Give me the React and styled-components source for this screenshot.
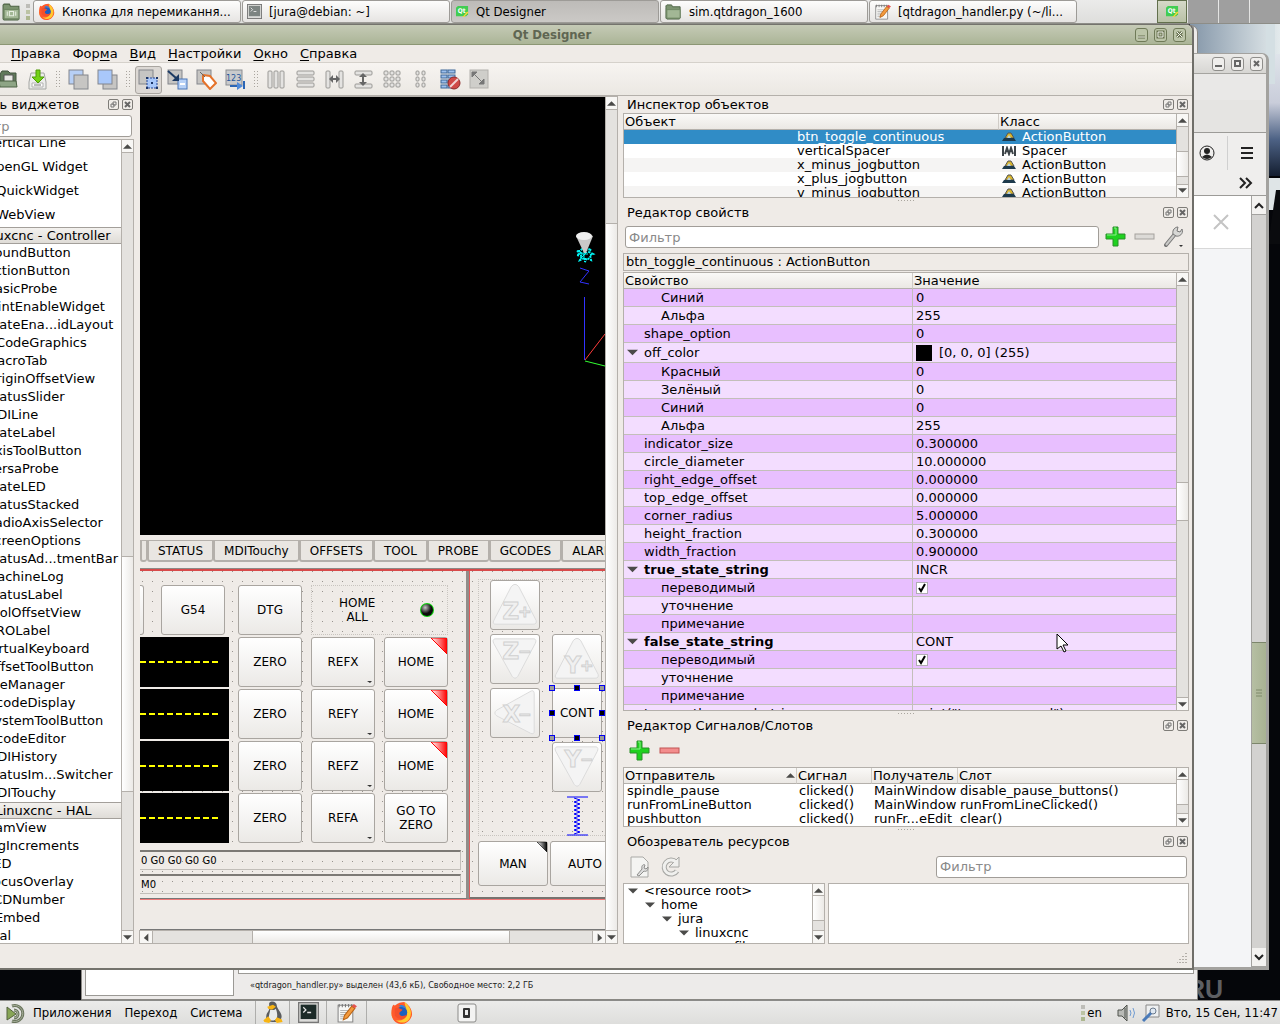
import React from 'react'
import styled, { createGlobalStyle, css } from 'styled-components'

const Face = '#efebe7'
const Edge = '#b4b0ab'
const Sans = '"DejaVu Sans", sans-serif'
const Narrow = '"DejaVu Sans Condensed", "DejaVu Sans", sans-serif'

const GlobalStyle = createGlobalStyle`
  * { box-sizing: border-box; }
  body {
    margin: 0;
    overflow: hidden;
    background: #05060a;
    font-family: ${Sans};
    font-size: 13px;
    color: #000;
  }
  button, input { font: inherit; color: inherit; }
  button { padding: 0; }
  svg { display: block; flex: none; }
`

const Screen = styled.div`
  display: flex;
  flex-direction: column;
  min-height: 100vh;
`

const Desktop = styled.main`
  flex: 1;
  position: relative;
  overflow: hidden;
  background: #05060a;
`

/* ---------- desktop panels ---------- */

const Panel = styled.div`
  height: 24px;
  display: flex;
  align-items: center;
  font-family: ${Narrow};
  font-size: 13px;
  background: linear-gradient(#ebebea, #dededc);
  overflow: hidden;
`

const TopPanel = styled(Panel)`
  border-bottom: 1px solid #8d8d87;
  gap: 1px;
`

const TaskButton = styled.button`
  flex: 0 1 208px;
  height: 23px;
  display: flex;
  align-items: center;
  gap: 7px;
  padding: 0 4px;
  border: 1px solid #9d9b97;
  border-radius: 3px;
  white-space: nowrap;
  background: ${(p) =>
    p.$active
      ? 'linear-gradient(#bdbbb8, #cbc9c6)'
      : 'linear-gradient(#fdfdfc, #e6e4e2)'};
`

const PanelIcon = styled.button`
  display: flex;
  align-items: center;
  justify-content: center;
  width: ${(p) => p.$width || 24}px;
  height: 23px;
  border: 0;
  background: none;
`

const Grip = styled.span`
  width: 4px;
  height: 16px;
  margin: 0 2px;
  background: linear-gradient(#bdbdb8 4px, transparent 4px 6px, #bcc3a4 6px 10px, transparent 10px 12px, #adb78f 12px);
`

const Spacer = styled.span`
  flex: 1;
`

const Workspace = styled.button`
  width: 30px;
  height: 23px;
  display: flex;
  align-items: center;
  justify-content: center;
  border: ${(p) => (p.$current ? '1px solid #62704d' : '0')};
  background: ${(p) =>
    p.$current ? 'linear-gradient(#d5d9c8, #b9c1a6)' : '#9f9f9f'};
`

const BottomPanel = styled(Panel)`
  border-top: 1px solid #8b8b89;
`

const PanelMenu = styled.button`
  margin-right: 13px;
  border: 0;
  background: none;
`

const Launcher = styled(PanelIcon)`
  border-left: 1px solid #aeaeac;
`

const Clock = styled.time`
  margin: 0 2px 0 3px;
  white-space: nowrap;
`

/* ---------- windows ---------- */

const Window = styled.section`
  position: absolute;
  display: flex;
  flex-direction: column;
  border: 1px solid #8a8884;
  background: ${Face};
`

const BrowserWindow = styled(Window)`
  top: 29px;
  right: 11px;
  bottom: 30px;
  width: 400px;
  border-width: 1px 3px 3px 1px;
  border-color: #a3a29f;
  border-radius: 0 7px 0 0;
  background: #ededed;
  align-items: stretch;
`

const FilesWindow = styled(Window)`
  top: 1px;
  left: 81px;
  right: 82px;
  bottom: 0;
  border-radius: 0 7px 0 0;
  background: #edebea;
  justify-content: flex-end;
`

const FilesPanes = styled.div`
  flex: 1;
  display: flex;
  gap: 4px;
  padding: 0 3px;
`

const FilesPane = styled.div`
  background: #fff;
  border: 1px solid #9b9995;
  width: ${(p) => p.$width || 'auto'};
  flex: ${(p) => (p.$width ? 'none' : 1)};
  margin-bottom: ${(p) => p.$gap}px;
`

const FilesStatus = styled.p`
  height: 24px;
  margin: -24px 0 0 168px;
  line-height: 20px;
  font-family: ${Narrow};
  font-size: 9px;
  color: #222;
`

const DesignerWindow = styled(Window)`
  top: 0;
  left: -48px;
  right: 86px;
  bottom: 30px;
  border-width: 1px 3px 2px 1px;
  border-color: #74736d;
  border-right: 2px solid #6f6e69;
  border-radius: 0 7px 0 0;
`

const TitleBar = styled.header`
  height: 20px;
  display: flex;
  align-items: center;
  gap: 6px;
  padding-right: ${(p) => (p.$plain ? 3 : 6)}px;
  font-family: ${Narrow};
  font-weight: bold;
  color: #5f6652;
  border-radius: 0 6px 0 0;
  border-bottom: 1px solid ${(p) => (p.$plain ? '#a5a4a0' : '#8c9775')};
  background: ${(p) =>
    p.$plain
      ? 'linear-gradient(#ebeae8, #d7d6d3)'
      : 'linear-gradient(#c5cab6, #abb597)'};
`

const TitleText = styled.h1`
  flex: 1;
  margin: 0;
  padding-left: 22px;
  font-size: 13px;
  text-align: center;
`

const WinButton = styled.button`
  width: 13px;
  height: 14px;
  display: flex;
  align-items: center;
  justify-content: center;
  border: 1px solid ${(p) => (p.$plain ? '#8f8e8b' : '#6f7a58')};
  border-radius: 3px;
  background: ${(p) => (p.$plain ? '#efeeec' : '#bcc5a9')};
`

const MenuBar = styled.nav`
  height: 18px;
  display: flex;
  align-items: center;
  gap: 12px;
  padding-left: 10px;
  border-bottom: 1px solid #d5d1cb;
  a {
    color: #000;
    text-decoration: none;
  }
  u {
    text-underline-offset: 2px;
  }
`

const ToolBar = styled.div`
  height: 33px;
  display: flex;
  align-items: center;
  padding: 1px 0 0 12px;
  border-bottom: 1px solid ${Edge};
  background: linear-gradient(#f7f4f1, #ebe8e3);
`

const ToolButton = styled.button`
  width: 27px;
  height: 28px;
  margin: 0 1px;
  display: flex;
  align-items: center;
  justify-content: center;
  border: 1px solid ${(p) => (p.$on ? '#a9a5a0' : 'transparent')};
  border-radius: 3px;
  background: ${(p) => (p.$on ? '#dcd8d4' : 'none')};
`

const ToolGap = styled.span`
  width: 4px;
  height: 17px;
  margin: 0 4px;
  background:
    linear-gradient(transparent 1px, #f1eeea 1px) 0 0 / 3px 3px,
    linear-gradient(90deg, #aaa69f 1px, transparent 1px) 0 0 / 3px 3px;
`

const Body = styled.div`
  flex: 1;
  min-height: 0;
  display: flex;
`

const StatusBar = styled.footer`
  height: 24px;
  display: flex;
  align-items: flex-end;
  justify-content: flex-end;
  padding: 4px;
`

/* ---------- scroll bars ---------- */

const Rail = styled.div`
  flex: none;
  display: flex;
  flex-direction: ${(p) => (p.$across ? 'row' : 'column')};
  ${(p) => (p.$across ? 'height: 13px;' : 'width: 12px;')}
  background: #e4e2df;
  border: 0 solid ${Edge};
  ${(p) => (p.$across ? 'border-top-width: 1px;' : 'border-left-width: 1px;')}
`

const RailButton = styled.button`
  flex: none;
  width: ${(p) => (p.$across ? 12 : 11)}px;
  height: 12px;
  display: flex;
  align-items: center;
  justify-content: center;
  border: 0;
  background: #f8f7f5;
  box-shadow: 0 0 0 1px ${Edge};
`

const Track = styled.div`
  flex: ${(p) => p.$part} 1 0;
`

const Thumb = styled(Track)`
  box-shadow: 0 0 0 1px ${Edge};
  background: linear-gradient(${(p) => (p.$across ? 180 : 90)}deg, #fff, #eceae7);
`

const arrows = {
  up: 'M0 7 L5 2 L10 7Z',
  down: 'M0 2 L5 7 L10 2Z',
  left: 'M7 0 L2 5 L7 9Z',
  right: 'M3 0 L8 5 L3 9Z',
}

function Arrow({ dir, size = 9 }) {
  return (
    <svg width={size} height={size} viewBox="0 0 10 9">
      <path d={arrows[dir]} fill="#4b4b49" />
    </svg>
  )
}

function ScrollBar({ across, start, size }) {
  return (
    <Rail $across={across}>
      <RailButton $across={across} aria-label="Назад">
        <Arrow dir={across ? 'left' : 'up'} />
      </RailButton>
      <Track $part={start} />
      <Thumb $part={size} $across={across} />
      <Track $part={100 - start - size} />
      <RailButton $across={across} aria-label="Вперёд">
        <Arrow dir={across ? 'right' : 'down'} />
      </RailButton>
    </Rail>
  )
}

/* ---------- docks ---------- */

const LeftDock = styled.aside`
  width: 181px;
  flex: none;
  display: flex;
  flex-direction: column;
`

const RightDock = styled.aside`
  flex: 0 0 569px;
  display: flex;
  flex-direction: column;
  padding-right: 3px;
`

const DockTitle = styled.div`
  height: 17px;
  flex: none;
  display: flex;
  align-items: center;
  gap: 3px;
  padding: 0 1px 0 4px;
`

const DockName = styled.h2`
  flex: 1;
  margin: 0;
  font-size: 13px;
  font-weight: normal;
  white-space: nowrap;
`

const DockButton = styled.button`
  width: 11px;
  height: 11px;
  display: flex;
  align-items: center;
  justify-content: center;
  border: 1px solid #7e7c78;
  border-radius: 2px;
  background: #efece8;
`

const Filter = styled.input`
  height: 22px;
  min-width: 0;
  padding: 0 3px;
  border: 1px solid #a19d98;
  border-radius: 3px;
  background: #fff;
  &::placeholder {
    color: #8a8a8a;
    opacity: 1;
  }
`

const PaletteFilter = styled(Filter)`
  margin: 2px 2px 2px 1px;
`

const ListFrame = styled.div`
  display: flex;
  min-height: 0;
  overflow: hidden;
  flex: ${(p) => (p.$height ? 'none' : 1)};
  ${(p) => p.$height && `height: ${p.$height}px;`}
  border: 1px solid ${Edge};
  background: #fff;
`

const ListView = styled.div`
  flex: 1;
  min-width: 0;
  min-height: 0;
  overflow: hidden;
`

const PaletteList = styled.ul`
  list-style: none;
  margin: -9px 0 0;
  padding: 0;
`

const PaletteItem = styled.li`
  height: ${(p) => (p.$tall ? 24 : 18)}px;
  line-height: ${(p) => (p.$tall ? 24 : 18)}px;
  padding-left: 32px;
  white-space: nowrap;
`

const PaletteGroup = styled.li`
  height: 17px;
  line-height: 15px;
  padding-left: 12px;
  text-align: center;
  white-space: nowrap;
  border: 1px solid #a39f9a;
  border-width: 1px 0;
  background: linear-gradient(#f3f1ee, #dfdcd7);
`

const Splitter = styled.div`
  flex: none;
  height: 6px;
  width: 16px;
  margin: 0 auto;
  background:
    linear-gradient(transparent 1px, ${Face} 1px) 0 2px / 3px 6px,
    linear-gradient(90deg, #aaa69f 1px, transparent 1px) 0 0 / 3px 3px;
`

const Grid = styled.table`
  width: 100%;
  table-layout: fixed;
  border-collapse: separate;
  border-spacing: 0;
  th {
    height: 16px;
    padding: 0 1px;
    line-height: 15px;
    font-weight: normal;
    text-align: left;
    border-bottom: 1px solid ${Edge};
    background: linear-gradient(#faf9f7, #ebe8e4);
  }
  th + th {
    border-left: 1px solid #d0ccc7;
  }
  td {
    height: 14px;
    padding: 0 0 0 4px;
    line-height: 14px;
    white-space: nowrap;
    overflow: hidden;
  }
`

const SignalGrid = styled(Grid)`
  td {
    padding-left: 3px;
  }
`

const HeadSplit = styled.span`
  display: flex;
  align-items: center;
  justify-content: space-between;
`

const ObjectRow = styled.tr`
  background: ${(p) => (p.$picked ? '#308cc6' : p.$odd ? '#f5f4f3' : '#fff')};
  color: ${(p) => (p.$picked ? '#fff' : '#000')};
  td:first-child {
    padding-left: 173px;
  }
`

const ClassCell = styled.span`
  display: flex;
  align-items: center;
  gap: 6px;
`

const PropRow = styled.tr`
  background: ${(p) => (p.$odd ? '#f3ddff' : '#e8bfff')};
  td {
    height: ${(p) => (p.$tall ? 20 : 18)}px;
    line-height: 17px;
    padding: 0 3px;
    border-bottom: 1px solid #c3bfba;
  }
  td + td {
    border-left: 1px solid #c3bfba;
  }
`

const PropName = styled.span`
  display: flex;
  align-items: center;
  gap: 6px;
  padding-left: ${(p) => (p.$depth === 2 ? 34 : p.$open ? 0 : 17)}px;
  font-weight: ${(p) => (p.$bold ? 'bold' : 'normal')};
`

const Swatch = styled.span`
  width: 16px;
  height: 16px;
  margin-right: 7px;
  background: #000;
`

const ColorValue = styled.span`
  display: flex;
  align-items: center;
`

const Tick = styled.input`
  appearance: none;
  display: block;
  width: 12px;
  height: 12px;
  margin: 0;
  border: 1px solid #b1adb4;
  background: #fff url("data:image/svg+xml,%3Csvg xmlns='http://www.w3.org/2000/svg' viewBox='0 0 10 10'%3E%3Cpath d='M2 5 L4 8 L8 1' fill='none' stroke='black' stroke-width='2'/%3E%3C/svg%3E");
`

const FilterRow = styled.div`
  flex: none;
  height: 32px;
  display: flex;
  align-items: center;
  gap: 5px;
  padding: 0 3px 0 2px;
`

const GrowFilter = styled(Filter)`
  flex: 1;
`

const SideFilter = styled(Filter)`
  width: 251px;
`

const FlatButton = styled.button`
  width: 24px;
  height: 24px;
  display: flex;
  align-items: center;
  justify-content: center;
  border: 0;
  background: none;
`

const ObjectLabel = styled.div`
  flex: none;
  height: 18px;
  margin-bottom: 1px;
  padding: 0 2px;
  line-height: 16px;
  border: 1px solid ${Edge};
`

const ToolRow = styled.div`
  flex: none;
  height: 33px;
  display: flex;
  align-items: center;
  gap: 6px;
  padding: 0 2px 0 5px;
`

const ResourceRow = styled.div`
  flex: none;
  height: 61px;
  display: flex;
  gap: 3px;
`

const ResourceFrame = styled(ListFrame)`
  height: 61px;
  flex: ${(p) => (p.$tree ? '0 0 202px' : 1)};
`

const TreeLine = styled.div`
  height: 14px;
  line-height: 14px;
  display: flex;
  align-items: center;
  gap: 6px;
  padding-left: ${(p) => 4 + p.$depth * 17}px;
  white-space: nowrap;
`

/* ---------- form editor ---------- */

const dots = css`
  background:
    linear-gradient(transparent 1px, ${Face} 1px) 2px 10px / 10px 10px,
    linear-gradient(90deg, #98948f 1px, transparent 1px) 2px 10px / 10px 10px;
`

const Editor = styled.div`
  flex: 1;
  min-width: 0;
  display: flex;
  margin: 0 5px;
  border: 1px solid ${Edge};
  border-left-color: ${Face};
`

const EditorMain = styled.div`
  flex: 1;
  min-width: 0;
  display: flex;
  flex-direction: column;
`

const Form = styled.div`
  flex: 1;
  min-height: 0;
  display: flex;
  flex-direction: column;
  overflow: hidden;
`

const GlView = styled.div`
  flex: 1;
  display: flex;
  justify-content: flex-end;
  padding-top: 133px;
  background: #000;
`

const Tabs = styled.div`
  display: flex;
  flex: none;
  height: 34px;
  padding: 5px 0 6px;
  border-bottom: 1px solid #8d8985;
  overflow: hidden;
`

const Tab = styled.button`
  flex: none;
  padding: 0 9px;
  border: 1px solid ${Edge};
  border-width: 1px 1px 2px 2px;
  border-radius: 0 0 3px 3px;
  background: #e9e6e2;
  font-size: 12px;
  line-height: 14px;
`

const CutTab = styled(Tab)`
  width: 7px;
  padding: 0;
`

const Page = styled.div`
  flex: none;
  display: flex;
  border-top: 2px solid #d84a4a;
  border-bottom: 1px solid #f27878;
  overflow: hidden;
`

const AxisFrame = styled.div`
  flex: 0 0 329px;
  padding: 14px 5px 4px 0;
  border-right: 3px solid #918d89;
  border-bottom: 1px solid #777;
  ${dots}
`

const FormRow = styled.div`
  display: flex;
  gap: 9px;
  margin-bottom: 2px;
`

const LeadCells = styled.div`
  width: 89px;
  height: 50px;
  flex: none;
  display: flex;
  justify-content: space-between;
  padding-right: ${(p) => (p.$head ? 4 : 0)}px;
`

const PushButton = styled.button`
  position: relative;
  flex: none;
  width: ${(p) => p.$width || 64}px;
  height: ${(p) => p.$height || 50}px;
  display: flex;
  align-items: center;
  justify-content: center;
  border: 1px solid #a9a5a0;
  border-radius: 3px;
  background: linear-gradient(#fff, #ebe9e6);
  font-size: 12px;
  line-height: 14px;
`

const CutButton = styled(PushButton)`
  width: 4px;
  border-left: 0;
  border-radius: 0 3px 3px 0;
`

const Corner = styled.svg`
  position: absolute;
  right: 0;
  top: 0;
`

const MenuMark = styled.svg`
  position: absolute;
  right: 2px;
  bottom: 2px;
`

const Readout = styled.div`
  flex: 1;
  display: flex;
  align-items: center;
  background: #000;
`

const HomeBox = styled.div`
  width: 137px;
  height: 50px;
  display: flex;
  align-items: center;
  justify-content: space-between;
  padding: 0 12px 0 27px;
  border: 1px dotted #c9c5c0;
  font-size: 12px;
  line-height: 14px;
  text-align: center;
`

const CodeLine = styled.div`
  height: 20px;
  margin-top: ${(p) => p.$first ? 7 : 4}px;
  padding-left: 1px;
  border: 1px solid #c2beb9;
  border-top: 2px solid #7c7975;
  border-left: 0;
  font-size: 10px;
  line-height: 17px;
`

const JogFrame = styled.div`
  flex: 1;
  min-width: 0;
  padding: 8px 0 11px 8px;
  border-left: 1px solid #e05a5a;
  border-bottom: 2px solid #77736f;
  overflow: hidden;
  ${dots}
`

const JogGrid = styled.div`
  display: grid;
  grid-template-columns: 50px 50px;
  grid-auto-rows: 50px;
  gap: 4px 12px;
  height: 257px;
  padding-left: 11px;
  border: 1px dotted #c9c5c0;
  border-width: 1px 0 1px 1px;
`

const Selected = styled.div`
  position: relative;
`

const Handle = styled.span`
  position: absolute;
  width: 6px;
  height: 6px;
  left: ${(p) => p.$x * 25 - 3}px;
  top: ${(p) => p.$y * 25 - 3}px;
  border: 1px solid #0000f0;
  background: ${(p) => (p.$x === 1 || p.$y === 1 ? '#000' : '#9a9a9a')};
`

const ModeRow = styled.div`
  display: flex;
  gap: 2px;
  margin-top: 5px;
`

const FormFoot = styled.div`
  flex: none;
  height: 30px;
  border-bottom: 1px solid #777;
`

/* ---------- browser behind ---------- */

const BrowserBar = styled.div`
  height: ${(p) => p.$height}px;
  flex: none;
  display: flex;
  flex-direction: column;
  align-items: flex-end;
  justify-content: space-between;
  padding: 8px 12px 4px 0;
  border-bottom: 1px solid #9c9b98;
  background: ${(p) => p.$bg};
`

const BrowserIcons = styled.div`
  display: flex;
  align-items: center;
  gap: 12px;
  height: 24px;
`

const Rule = styled.span`
  width: 1px;
  height: 34px;
  background: #d0d0d0;
`

const BrowserBody = styled.div`
  flex: 1;
  display: flex;
`

const BrowserPage = styled.div`
  flex: 1;
  background: #f4f5f7;
`

const Notice = styled.div`
  height: 53px;
  display: flex;
  align-items: center;
  justify-content: flex-end;
  padding-right: 21px;
  background: #fff;
  border-bottom: 1px solid #d8d8d8;
`

const BrowserRail = styled.div`
  width: 15px;
  display: flex;
  flex-direction: column;
  border-left: 1px solid #a3a29f;
  background: #d3d2d0;
  button {
    height: 19px;
    padding: 0;
    border: 0;
    border-bottom: 1px solid #a3a29f;
    background: #f3f2f0;
  }
`

const BrowserThumb = styled.div`
  flex: 100 1 0;
  display: flex;
  align-items: center;
  justify-content: center;
  border: 1px solid #7c866b;
  border-width: 1px 0;
  background: linear-gradient(90deg, #b6bfa3, #a8b293);
`

const Pointer = styled.svg`
  position: absolute;
  left: 1056px;
  top: 609px;
`

const Wallpaper = styled.svg`
  position: absolute;
  right: 0;
  top: 0;
`

const WallText = styled.span`
  position: absolute;
  right: 57px;
  bottom: -3px;
  font: bold 25px/28px "Liberation Sans", sans-serif;
  color: #5d5f63;
`

/* ---------- drawings ---------- */

function QtIcon() {
  return (
    <svg width="13" height="13" viewBox="0 0 14 14">
      <path d="M2 1h11v9l-2 2H0V3z" fill="#41cd52" />
      <text x="2" y="9" fontSize="7" fontWeight="bold" fill="#fff">Qt</text>
      <path d="M7 13l5-6 1.500 1-5 5z" fill="#ffd633" />
    </svg>
  )
}

function Firefox({ size = 17 }) {
  return (
    <svg width={size} height={size} viewBox="0 0 24 24">
      <circle cx="12" cy="13" r="10.500" fill="#ff9a1f" />
      <path d="M2 7 C3 4 4 3 5 5 C8 2 12 1 15 1 C20 4 23 9 23 14 C22 20 17 24 12 24 C5 24 0 18 2 7Z" fill="#ff5a2c" />
      <path d="M15 1 C23 7 23 14 20 19 C17 23 11 24 6 20 C13 22 20 17 17 9Z" fill="#ffcb2e" />
      <circle cx="12" cy="12" r="6" fill="#1d5fbf" />
      <path d="M5 8 C8 6 10 8 13 9 C12 11 9 11 10 14 C12 17 16 15 18 14 C16 20 8 20 5 15Z" fill="#f4502a" />
      <path d="M9 5 C12 3 16 5 17 8 C14 6 12 7 9 5Z" fill="#2a86df" />
    </svg>
  )
}

function FolderIcon({ size = 17, mark }) {
  return (
    <svg width={size} height={size} viewBox="0 0 18 18">
      <path d="M1 5V3l1-1h5l1 2h8v12l-1 1H2l-1-1z" fill="#7c9470" stroke="#4d6344" />
      <path d="M2 7h14v9H2z" fill="#a2b795" stroke="#6f8763" />
      {mark && <path d="M5 9v4m8-4v4M7 9h4v4H7z" fill="none" stroke="#e8efe2" />}
    </svg>
  )
}

function TerminalIcon({ size = 15, dark }) {
  return (
    <svg width={size} height={size} viewBox="0 0 16 16">
      <rect x="0.500" y="0.500" width="15" height="15" fill="#dcdcda" stroke="#777" />
      <rect x="2" y="2" width="12" height="11" fill={dark ? '#1c2b28' : '#7d8482'} />
      <path d="M4 4l2 2-2 2M7 8h3" fill="none" stroke="#e5e5e5" />
    </svg>
  )
}

function NoteIcon({ size = 17 }) {
  return (
    <svg width={size} height={size} viewBox="0 0 20 20">
      <path d="M2 3h14v16H2z" fill="#f7f7f5" stroke="#888" />
      <path d="M3 2v3M6 2v3M9 2v3M12 2v3M15 2v3" stroke="#777" />
      <path d="M4 8h9M4 10h8M4 12h6M4 14h5M4 16h4" stroke="#b5b5b5" />
      <path d="M8 13l7-9 3 2-7 9-4 2z" fill="#f39a3d" stroke="#b96212" />
      <path d="M15 4l2-2 3 2-2 2z" fill="#e4534e" />
    </svg>
  )
}

function MateLogo() {
  return (
    <svg width="22" height="20" viewBox="0 0 22 20">
      <path d="M1 4v13l9-6z" fill="#87a556" stroke="#54633f" />
      <path d="M6 3a8 8 0 1 1 0 15M8 7a4 4 0 1 1 0 8" fill="none" stroke="#69745c" strokeWidth="3" />
      <path d="M6 3a8 8 0 1 1 0 15M8 7a4 4 0 1 1 0 8" fill="none" stroke="#a7b09b" />
    </svg>
  )
}

function Penguin() {
  return (
    <svg width="22" height="23" viewBox="0 0 22 24">
      <path d="M7 2c3-3 8-1 8 3 0 3 5 7 5 11 0 4-3 6-8 6s-9-2-8-6c0-4 3-5 3-8z" fill="#5a5c5e" />
      <path d="M8 9c3 1 5 0 6-1 1 3 2 6 1 10-2 3-6 3-8 1-1-4 1-7 1-10z" fill="#e9ebec" />
      <path d="M5 6l6-2 3 2-4 3-4-1zM1 20l5-4 3 4-2 3-5-1zM13 20l2-3 5 2 1 3-6 1z" fill="#f7b413" />
    </svg>
  )
}

function SwitchIcon() {
  return (
    <svg width="20" height="20" viewBox="0 0 20 20">
      <rect x="1" y="1" width="18" height="18" rx="2" fill="#f3f3f2" stroke="#8b8b89" />
      <rect x="6" y="5" width="7" height="10" rx="1" fill="#333" />
      <rect x="8" y="7" width="3" height="5" fill="#eee" />
    </svg>
  )
}

function Speaker() {
  return (
    <svg width="20" height="20" viewBox="0 0 20 20">
      <path d="M1 7h4l5-5v16l-5-5H1z" fill="#b9bbb7" stroke="#4f524d" />
      <path d="M8 5v10" stroke="#4f524d" />
      <path d="M13 7q2 3 0 6M16 5q3 5 0 10" fill="none" stroke="#6f9bd1" />
    </svg>
  )
}

function SearchIcon() {
  return (
    <svg width="20" height="20" viewBox="0 0 20 20">
      <path d="M5 2h13v12H5z" fill="#eef0f1" stroke="#888" />
      <circle cx="12" cy="8" r="3" fill="#dfe8f2" stroke="#6b7a8c" />
      <path d="M10 10l-8 8" stroke="#4a7ab8" strokeWidth="3" />
    </svg>
  )
}

const winMarks = {
  min: 'M2 8h7',
  max: 'M3 3h5v5h-5z',
  close: 'M3 3l5 5M8 3l-5 5',
}

function WinButtons({ plain }) {
  return ['min', 'max', 'close'].map((kind) => (
    <WinButton key={kind} $plain={plain} aria-label={kind}>
      <svg width="11" height="11" viewBox="0 0 11 11">
        {!plain && <path d={winMarks[kind]} fill="none" stroke="#66704f" strokeWidth="3" />}
        <path d={winMarks[kind]} fill="none" stroke={plain ? '#666' : '#f4f6ee'} strokeWidth={plain ? 2 : 1} />
      </svg>
    </WinButton>
  ))
}

const SquareBack = ({ x, y, fill = '#c6c5c3' }) => (
  <rect x={x} y={y} width="14" height="14" fill={fill} stroke="#83868c" />
)

const LayoutBox = (p) => (
  <rect rx="1" fill="#e4e3e1" stroke="#9a9996" {...p} />
)

const toolDrawings = {
  new: <path d="M4 1h9l4 4v15H4z" fill="#fff" stroke="#888" />,
  open: (
    <>
      <path d="M2 5l2-3h6l2 2h6v12H2z" fill="#60795a" stroke="#42553e" />
      <path d="M6 6h9v9H6z" fill="#e8e8e4" stroke="#555" />
      <path d="M1 12h17l1 6H2z" fill="#8ea585" stroke="#4d6344" />
    </>
  ),
  save: (
    <>
      <path d="M4 4h13l2 9v7H2v-7z" fill="#ecedeb" stroke="#a3a5a2" />
      <path d="M5 14h11v4H5z" fill="#fff" stroke="#b1b1af" />
      <path d="M7 16h7" stroke="#777" />
      <path d="M9 1h4v7h4l-6 6-6-6h4z" fill="#73d216" stroke="#4e9a06" />
    </>
  ),
  lower: (
    <>
      <SquareBack x="1" y="1" fill="#b7cff5" />
      <SquareBack x="6" y="6" />
    </>
  ),
  raise: (
    <>
      <SquareBack x="6" y="6" />
      <SquareBack x="1" y="1" fill="#a9c8fa" />
    </>
  ),
  edit: (
    <>
      <SquareBack x="1" y="1" />
      <rect x="9" y="9" width="10" height="10" fill="#a9c8fa" stroke="#28489a" strokeDasharray="2 1" />
      <path d="M8 8h2v2h-2zM18 8h2v2h-2zM8 18h2v2h-2zM18 18h2v2h-2zM13 13h2v2h-2z" fill="#1c3568" />
    </>
  ),
  signals: (
    <>
      <SquareBack x="1" y="1" />
      <rect x="11" y="10" width="9" height="10" fill="#b7d1f6" stroke="#4a76b8" />
      <path d="M13 15h5" stroke="#fff" strokeWidth="2" />
      <path d="M1 2l8 7" stroke="#1c3a63" strokeWidth="2" />
      <path d="M12 5v7H5z" fill="#1c3a63" />
    </>
  ),
  buddy: (
    <>
      <SquareBack x="1" y="1" />
      <path d="M7 6l7 1 6 7-6 6-7-8z" fill="#fff" stroke="#e5732b" strokeWidth="2" />
      <path d="M4 3l5 5" stroke="#666" />
    </>
  ),
  order: (
    <>
      <rect x="1" y="1" width="16" height="15" fill="#c9cacc" stroke="#8a8d92" />
      <text x="1" y="12" fontSize="8" fill="#24579b">123</text>
      <path d="M5 17h8M19 12v8" stroke="#2b66b5" strokeWidth="2" />
      <path d="M12 13l6 4-6 4z" fill="#4f8ad8" />
    </>
  ),
  horizontal: [2, 8, 14].map((x) => <LayoutBox key={x} x={x} y="2" width="4" height="17" />),
  vertical: [2, 8, 14].map((y) => <LayoutBox key={y} x="2" y={y} width="17" height="4" />),
  splitH: (
    <>
      <LayoutBox x="2" y="2" width="4" height="17" />
      <LayoutBox x="15" y="2" width="4" height="17" />
      <path d="M5 10l4-4v3h3v-3l4 4-4 4v-3h-3v3z" fill="#666" />
    </>
  ),
  splitV: (
    <>
      <LayoutBox x="2" y="2" width="17" height="4" />
      <LayoutBox x="2" y="15" width="17" height="4" />
      <path d="M10 4l4 4h-3v5h3l-4 4-4-4h3v-5h-3z" fill="#666" />
    </>
  ),
  grid: [2, 8, 14].map((y) =>
    [2, 8, 14].map((x) => <LayoutBox key={`${x}-${y}`} x={x} y={y} width="4" height="4" />),
  ),
  formGrid: [2, 8, 14].map((y) =>
    [5, 11].map((x) => <LayoutBox key={`${x}-${y}`} x={x} y={y} width="3" height="4" />),
  ),
  breakLayout: (
    <>
      {[1, 6, 11, 16].map((y) => (
        <g key={y} fill="#9cc0ee" stroke="#3c6797">
          <rect x="1" y={y} width="6" height="3" />
          <rect x="8" y={y} width="7" height="3" />
        </g>
      ))}
      <circle cx="14" cy="14" r="6" fill="#cf4a48" stroke="#8e2b2b" />
      <path d="M10 18l8-8" stroke="#f0d5d5" strokeWidth="2" />
    </>
  ),
  adjust: (
    <>
      <rect x="1" y="1" width="18" height="18" fill="#cfceca" stroke="#b2b0ac" />
      <path d="M3 3h5l-5 5zM15 15h-5l5-5zM5 5l8 8" fill="#777" stroke="#777" />
    </>
  ),
}

function ToolIcon({ name }) {
  return (
    <svg width="21" height="21" viewBox="0 0 21 21">
      {toolDrawings[name]}
    </svg>
  )
}

function PlusIcon() {
  return (
    <svg width="22" height="22" viewBox="0 0 22 22">
      <path d="M8 1h5v7h7v5h-7v7H8v-7H1V8h7z" fill="#1fd11f" stroke="#2b8f2b" />
      <path d="M9 2h2v7H2" fill="none" stroke="#8cf08c" />
    </svg>
  )
}

function MinusIcon({ red }) {
  return (
    <svg width="22" height="22" viewBox="0 0 22 22">
      <rect x="1" y="8" width="19" height="5" fill={red ? '#f38d8d' : '#dcdad7'} stroke={red ? '#c25555' : '#a5a29e'} />
    </svg>
  )
}

function Wrench() {
  return (
    <svg width="20" height="22" viewBox="0 0 20 22">
      <path d="M2 19l9-11" stroke="#777" strokeWidth="4" strokeLinecap="round" />
      <path d="M2 19l9-11" stroke="#c9c9c7" strokeWidth="2" />
      <path d="M9 8c-1-4 2-7 5-7l-1 4 3 1 2-3c2 5-3 8-6 7z" fill="#d7d7d5" stroke="#777" />
      <path d="M15 19h4l-2 2z" fill="#333" />
    </svg>
  )
}

function WidgetIcon({ spacer }) {
  return (
    <svg width="14" height="10" viewBox="0 0 14 10">
      {spacer ? (
        <path d="M1 0v10M13 0v10M3 8l2-6 2 6 2-6 2 6" fill="none" stroke="#3d4448" strokeWidth="2" />
      ) : (
        <>
          <path d="M3 6l3-5h3l3 5z" fill="#d8b52c" stroke="#555" />
          <path d="M0 9l2-3h10l2 3z" fill="#1d3a4c" />
          <path d="M5 6l2-3 2 3z" fill="#b8d0e0" />
        </>
      )}
    </svg>
  )
}

function JogIcon({ dir, label }) {
  const shapes = {
    up: 'M21 6Q25 1 29 6L47 41Q48 45 44 45H5Q1 45 3 41Z',
    down: 'M4 4H45Q48 5 46 9L28 43Q25 47 22 43L3 9Q1 5 4 4Z',
    left: 'M42 2Q45 1 45 5V44Q45 48 41 46L6 28Q2 25 6 22Z',
  }
  const y = { up: 40, down: 25, left: 34 }[dir]
  return (
    <svg width="48" height="48" viewBox="0 0 50 50">
      <path d={shapes[dir]} fill="#f4f4f4" stroke="#dadada" />
      <text x="12" y={y} fontSize="24" fontWeight="bold" fill="#f0f0f0" stroke="#d0d0d0">{label[0]}</text>
      <text x="28" y={y - 2} fontSize="17" fontWeight="bold" fill="#f3f3f3" stroke="#d0d0d0">{label[1]}</text>
    </svg>
  )
}

function GlScene() {
  return (
    <svg width="40" height="142" viewBox="565 230 40 142" fill="none">
      <path d="M577 251l4 2-4 2 5 1-2 4 5-2v4l2-4 4 2-1-5 3-1-4-2 2-3-5 1-3-2-3 3z" stroke="#00f5f5" strokeWidth="2" strokeDasharray="2 1" />
      <path d="M581 254h7M584 251v8M582 257l5-5" stroke="#00f5f5" />
      <path d="M576 236q8-5 17 0l-7 17h-2z" fill="#c9c9c9" />
      <ellipse cx="584" cy="236" rx="8" ry="4" fill="#efefef" />
      <path d="M580 268l9 3-9 11 9 2" stroke="#3232ff" />
      <path d="M584 297h1v63h-1z" fill="#3232ff" />
      <path d="M585 360l20-26" stroke="#ff3b3b" />
      <path d="M585 361l20 5" stroke="#32ff32" />
    </svg>
  )
}

function Led() {
  return (
    <svg width="15" height="15" viewBox="0 0 15 15">
      <defs>
        <radialGradient id="led" cx="35%" cy="30%">
          <stop offset="0" stopColor="#c5c5c5" />
          <stop offset="1" stopColor="#0b0b0b" />
        </radialGradient>
      </defs>
      <circle cx="7" cy="7" r="7" fill="#0cd00c" />
      <circle cx="7" cy="7" r="6" fill="url(#led)" />
    </svg>
  )
}

function CornerMark({ size, color }) {
  return (
    <Corner width={size} height={size} viewBox="0 0 16 16">
      <defs>
        <linearGradient id={`corner-${color}`}>
          <stop offset="0" stopColor="#fff" />
          <stop offset="1" stopColor={color} />
        </linearGradient>
      </defs>
      <path d="M0 0h16v16z" fill={`url(#corner-${color})`} stroke={color} />
    </Corner>
  )
}

/* ---------- data ---------- */

const tallItems = ['Vertical Line', 'OpenGL Widget', 'QQuickWidget', 'QWebView']

const controllerItems = [
  'RoundButton', 'ActionButton', 'BasicProbe', 'JointEnableWidget',
  'StateEna...idLayout', 'GCodeGraphics', 'MacroTab', 'OriginOffsetView',
  'StatusSlider', 'MDILine', 'StateLabel', 'AxisToolButton', 'VersaProbe',
  'StateLED', 'StatusStacked', 'RadioAxisSelector', 'ScreenOptions',
  'StatusAd...tmentBar', 'MachineLog', 'StatusLabel', 'ToolOffsetView',
  'DROLabel', 'VirtualKeyboard', 'OffsetToolButton', 'FileManager',
  'GcodeDisplay', 'SystemToolButton', 'GcodeEditor', 'MDIHistory',
  'StatusIm...Switcher', 'MDITouchy',
]

const halItems = ['CamView', 'JogIncrements', 'LED', 'FocusOverlay', 'LCDNumber', 'XEmbed', 'Dial']

const objects = [
  ['btn_toggle_continuous', 'ActionButton'],
  ['verticalSpacer', 'Spacer'],
  ['x_minus_jogbutton', 'ActionButton'],
  ['x_plus_jogbutton', 'ActionButton'],
  ['y_minus_jogbutton', 'ActionButton'],
]

const props = [
  { name: 'Синий', value: '0', depth: 2 },
  { name: 'Альфа', value: '255', depth: 2 },
  { name: 'shape_option', value: '0' },
  { name: 'off_color', value: '[0, 0, 0] (255)', open: true, color: true },
  { name: 'Красный', value: '0', depth: 2 },
  { name: 'Зелёный', value: '0', depth: 2 },
  { name: 'Синий', value: '0', depth: 2 },
  { name: 'Альфа', value: '255', depth: 2 },
  { name: 'indicator_size', value: '0.300000' },
  { name: 'circle_diameter', value: '10.000000' },
  { name: 'right_edge_offset', value: '0.000000' },
  { name: 'top_edge_offset', value: '0.000000' },
  { name: 'corner_radius', value: '5.000000' },
  { name: 'height_fraction', value: '0.300000' },
  { name: 'width_fraction', value: '0.900000' },
  { name: 'true_state_string', value: 'INCR', open: true, bold: true },
  { name: 'переводимый', check: true, depth: 2 },
  { name: 'уточнение', value: '', depth: 2 },
  { name: 'примечание', value: '', depth: 2 },
  { name: 'false_state_string', value: 'CONT', open: true, bold: true },
  { name: 'переводимый', check: true, depth: 2 },
  { name: 'уточнение', value: '', depth: 2 },
  { name: 'примечание', value: '', depth: 2 },
  { name: 'true_python_cmd_string', value: 'print("true command")' },
]

const signals = [
  ['spindle_pause', 'clicked()', 'MainWindow', 'disable_pause_buttons()'],
  ['runFromLineButton', 'clicked()', 'MainWindow', 'runFromLineClicked()'],
  ['pushbutton', 'clicked()', 'runFr...eEdit', 'clear()'],
]

const resources = ['<resource root>', 'home', 'jura', 'linuxcnc', 'nc_files']

const tools = [
  ['new', 'open', 'save'],
  ['lower', 'raise'],
  ['edit', 'signals', 'buddy', 'order'],
  ['horizontal', 'vertical', 'splitH', 'splitV', 'grid', 'formGrid', 'breakLayout', 'adjust'],
]

const tabs = ['STATUS', 'MDITouchy', 'OFFSETS', 'TOOL', 'PROBE', 'GCODES', 'ALARMS']

const axes = [
  ['REFX', 'HOME'],
  ['REFY', 'HOME'],
  ['REFZ', 'HOME'],
  ['REFA', 'GO TO ZERO'],
]

const handles = [[0, 0], [1, 0], [2, 0], [0, 1], [2, 1], [0, 2], [1, 2], [2, 2]]

/* ---------- parts ---------- */

function DockHeader({ name }) {
  return (
    <DockTitle>
      <DockName>{name}</DockName>
      <DockButton aria-label="Отсоединить">
        <svg width="7" height="7" viewBox="0 0 7 7">
          <path d="M3 1h3v3h-3zM1 3h3v3h-3z" fill="none" stroke="#777" />
        </svg>
      </DockButton>
      <DockButton aria-label="Закрыть">
        <svg width="7" height="7" viewBox="0 0 7 7">
          <path d="M1 1l5 5M6 1l-5 5" stroke="#666" strokeWidth="2" />
        </svg>
      </DockButton>
    </DockTitle>
  )
}

function WidgetBox() {
  return (
    <LeftDock>
      <DockHeader name="Панель виджетов" />
      <PaletteFilter placeholder="Фильтр" aria-label="Фильтр виджетов" />
      <ListFrame>
        <ListView>
          <PaletteList>
            {tallItems.map((t) => <PaletteItem key={t} $tall>{t}</PaletteItem>)}
            <PaletteGroup>Linuxcnc - Controller</PaletteGroup>
            {controllerItems.map((t) => <PaletteItem key={t}>{t}</PaletteItem>)}
            <PaletteGroup>Linuxcnc - HAL</PaletteGroup>
            {halItems.map((t) => <PaletteItem key={t}>{t}</PaletteItem>)}
          </PaletteList>
        </ListView>
        <ScrollBar start={52} size={30} />
      </ListFrame>
    </LeftDock>
  )
}

function FormEditor() {
  return (
    <Editor>
      <EditorMain>
        <Form>
          <GlView><GlScene /></GlView>
          <Tabs>
            <CutTab aria-label="MAIN" />
            {tabs.map((t) => <Tab key={t}>{t}</Tab>)}
          </Tabs>
          <Page>
            <AxisFrame>
              <FormRow>
                <LeadCells $head>
                  <CutButton aria-label="MDI" />
                  <PushButton>G54</PushButton>
                </LeadCells>
                <PushButton>DTG</PushButton>
                <HomeBox>
                  <span>HOME<br />ALL</span>
                  <Led />
                </HomeBox>
              </FormRow>
              {axes.map(([ref, home]) => (
                <FormRow key={ref}>
                  <LeadCells>
                    <Readout>
                      <svg width="80" height="2">
                        <path d="M0 1h80" stroke="#ff0" strokeWidth="2" strokeDasharray="6 3" />
                      </svg>
                    </Readout>
                  </LeadCells>
                  <PushButton>ZERO</PushButton>
                  <PushButton>
                    {ref}
                    <MenuMark width="5" height="4"><path d="M0 1h5l-2 2z" fill="#333" /></MenuMark>
                  </PushButton>
                  <PushButton>
                    {home}
                    {home === 'HOME' && <CornerMark size="16" color="red" />}
                  </PushButton>
                </FormRow>
              ))}
              <CodeLine $first>0 G0 G0 G0 G0</CodeLine>
              <CodeLine>M0</CodeLine>
            </AxisFrame>
            <JogFrame>
              <JogGrid>
                <PushButton $width={50}><JogIcon dir="up" label="Z+" /></PushButton>
                <span />
                <PushButton $width={50}><JogIcon dir="down" label="Z−" /></PushButton>
                <PushButton $width={50}><JogIcon dir="up" label="Y+" /></PushButton>
                <PushButton $width={50}><JogIcon dir="left" label="X−" /></PushButton>
                <Selected>
                  <PushButton $width={50}>CONT</PushButton>
                  {handles.map(([x, y]) => <Handle key={`${x}${y}`} $x={x} $y={y} />)}
                </Selected>
                <span />
                <PushButton $width={50}><JogIcon dir="down" label="Y−" /></PushButton>
                <span />
                <svg width="50" height="40" viewBox="0 0 50 40">
                  <path d="M15 1h21M15 39h21" stroke="#00f" />
                  <path d="M22 2l6 2-6 2 6 2-6 2 6 2-6 2 6 2-6 2 6 2-6 2 6 2-6 2 6 2-6 2 6 2-6 2 6 2-6 2" fill="none" stroke="#00f" />
                </svg>
              </JogGrid>
              <ModeRow>
                <PushButton $width={70} $height={45}>
                  MAN
                  <CornerMark size="10" color="black" />
                </PushButton>
                <PushButton $width={70} $height={45}>AUTO</PushButton>
              </ModeRow>
            </JogFrame>
          </Page>
          <FormFoot />
        </Form>
        <ScrollBar across start={23} size={58} />
      </EditorMain>
      <ScrollBar start={14} size={86} />
    </Editor>
  )
}

function ObjectInspector() {
  return (
    <>
      <DockHeader name="Инспектор объектов" />
      <ListFrame $height={85}>
        <ListView>
          <Grid>
            <colgroup><col /><col width="178" /></colgroup>
            <thead><tr><th>Объект</th><th>Класс</th></tr></thead>
            <tbody>
              {objects.map(([name, cls], i) => (
                <ObjectRow key={name} $picked={i === 0} $odd={i % 2 === 0}>
                  <td>{name}</td>
                  <td><ClassCell><WidgetIcon spacer={cls === 'Spacer'} />{cls}</ClassCell></td>
                </ObjectRow>
              ))}
            </tbody>
          </Grid>
        </ListView>
        <ScrollBar start={44} size={40} />
      </ListFrame>
      <Splitter />
    </>
  )
}

function PropValue({ prop }) {
  if (prop.check) return <Tick type="checkbox" defaultChecked aria-label={prop.name} />
  if (prop.color) return <ColorValue><Swatch />{prop.value}</ColorValue>
  return prop.value
}

function PropertyEditor() {
  return (
    <>
      <DockHeader name="Редактор свойств" />
      <FilterRow>
        <GrowFilter placeholder="Фильтр" aria-label="Фильтр свойств" />
        <FlatButton aria-label="Добавить"><PlusIcon /></FlatButton>
        <FlatButton aria-label="Удалить"><MinusIcon /></FlatButton>
        <FlatButton aria-label="Настроить"><Wrench /></FlatButton>
      </FilterRow>
      <ObjectLabel>btn_toggle_continuous : ActionButton</ObjectLabel>
      <ListFrame>
        <ListView>
          <Grid>
            <colgroup><col /><col width="264" /></colgroup>
            <thead><tr><th>Свойство</th><th>Значение</th></tr></thead>
            <tbody>
              {props.map((p, i) => (
                <PropRow key={i} $odd={i % 2 === 1} $tall={p.color}>
                  <td>
                    <PropName $depth={p.depth} $open={p.open} $bold={p.bold}>
                      {p.open && <Arrow dir="down" size={11} />}
                      {p.name}
                    </PropName>
                  </td>
                  <td><PropValue prop={p} /></td>
                </PropRow>
              ))}
            </tbody>
          </Grid>
        </ListView>
        <ScrollBar start={48} size={9} />
      </ListFrame>
      <Splitter />
    </>
  )
}

function SignalEditor() {
  return (
    <>
      <DockHeader name="Редактор Сигналов/Слотов" />
      <ToolRow>
        <FlatButton aria-label="Добавить соединение"><PlusIcon /></FlatButton>
        <FlatButton aria-label="Удалить соединение"><MinusIcon red /></FlatButton>
      </ToolRow>
      <ListFrame $height={60}>
        <ListView>
          <SignalGrid>
            <colgroup><col width="172" /><col width="75" /><col width="86" /><col /></colgroup>
            <thead>
              <tr>
                <th><HeadSplit>Отправитель<Arrow dir="up" /></HeadSplit></th>
                <th>Сигнал</th>
                <th>Получатель</th>
                <th>Слот</th>
              </tr>
            </thead>
            <tbody>
              {signals.map((row) => (
                <tr key={row[0]}>{row.map((cell) => <td key={cell}>{cell}</td>)}</tr>
              ))}
            </tbody>
          </SignalGrid>
        </ListView>
        <ScrollBar start={0} size={72} />
      </ListFrame>
      <Splitter />
    </>
  )
}

function ResourceBrowser() {
  return (
    <>
      <DockHeader name="Обозреватель ресурсов" />
      <ToolRow>
        <FlatButton aria-label="Изменить ресурсы">
          <svg width="20" height="22" viewBox="0 0 20 22">
            <path d="M1 1h12l5 5v15H1z" fill="#f4f4f2" stroke="#a9a9a6" />
            <path d="M7 19l5-6c-1-4 2-5 3-4l-1 3 2 1 2-2c0 4-2 5-4 4l-5 5z" fill="#ddd" stroke="#8e8e8c" />
          </svg>
        </FlatButton>
        <FlatButton aria-label="Обновить">
          <svg width="22" height="22" viewBox="0 0 22 22">
            <path d="M17 6a7 7 0 1 0 1 9" fill="none" stroke="#a6a6a3" strokeWidth="5" />
            <path d="M20 1v10h-10z" fill="#efefed" stroke="#a6a6a3" />
            <path d="M17 6a7 7 0 1 0 1 9" fill="none" stroke="#f0f0ee" strokeWidth="3" />
          </svg>
        </FlatButton>
        <Spacer />
        <SideFilter placeholder="Фильтр" aria-label="Фильтр ресурсов" />
      </ToolRow>
      <ResourceRow>
        <ResourceFrame $tree>
          <ListView>
            {resources.map((name, i) => (
              <TreeLine key={name} $depth={i}><Arrow dir="down" size={10} />{name}</TreeLine>
            ))}
          </ListView>
          <ScrollBar start={0} size={68} />
        </ResourceFrame>
        <ResourceFrame />
      </ResourceRow>
    </>
  )
}

function Designer() {
  return (
    <DesignerWindow>
      <TitleBar><TitleText>Qt Designer</TitleText><WinButtons /></TitleBar>
      <MenuBar>
        <a href="#file"><u>Ф</u>айл</a>
        <a href="#edit"><u>П</u>равка</a>
        <a href="#form">Фор<u>м</u>а</a>
        <a href="#view"><u>В</u>ид</a>
        <a href="#settings"><u>Н</u>астройки</a>
        <a href="#window"><u>О</u>кно</a>
        <a href="#help"><u>С</u>правка</a>
      </MenuBar>
      <ToolBar>
        {tools.map((group, i) => (
          <React.Fragment key={i}>
            {i > 0 && <ToolGap />}
            {group.map((name) => (
              <ToolButton key={name} $on={name === 'edit'} aria-label={name}>
                <ToolIcon name={name} />
              </ToolButton>
            ))}
          </React.Fragment>
        ))}
      </ToolBar>
      <Body>
        <WidgetBox />
        <FormEditor />
        <RightDock>
          <ObjectInspector />
          <PropertyEditor />
          <SignalEditor />
          <ResourceBrowser />
        </RightDock>
      </Body>
      <StatusBar>
        <svg width="11" height="11">
          <path d="M9 0v11M6 3v8M3 6v5M0 9v2" stroke="#b3afa9" strokeWidth="2" strokeDasharray="1 2" />
        </svg>
      </StatusBar>
    </DesignerWindow>
  )
}

function Browser() {
  return (
    <BrowserWindow>
      <TitleBar $plain><Spacer /><WinButtons plain /></TitleBar>
      <BrowserBar $height={59} $bg="linear-gradient(#e9e8e7 26px, #e5e4e2 26px)" />
      <BrowserBar $height={63} $bg="#efeeed">
        <BrowserIcons>
          <svg width="16" height="16" viewBox="0 0 16 16">
            <circle cx="8" cy="8" r="7" fill="none" stroke="#222" />
            <circle cx="8" cy="6" r="3" fill="#222" />
            <path d="M3 12q5-5 10 0-5 4-10 0z" fill="#222" />
          </svg>
          <Rule />
          <svg width="14" height="14" viewBox="0 0 14 14">
            <path d="M1 2h12M1 7h12M1 12h12" stroke="#222" strokeWidth="2" />
          </svg>
        </BrowserIcons>
        <svg width="16" height="16" viewBox="0 0 16 16">
          <path d="M2 3l5 5-5 5M8 3l5 5-5 5" fill="none" stroke="#222" strokeWidth="2" />
        </svg>
      </BrowserBar>
      <BrowserBody>
        <BrowserPage>
          <Notice>
            <svg width="18" height="18" viewBox="0 0 18 18">
              <path d="M2 2l14 14M16 2l-14 14" stroke="#c4c4c4" strokeWidth="2" />
            </svg>
          </Notice>
        </BrowserPage>
        <BrowserRail>
          <button aria-label="Вверх">
            <svg width="13" height="9" viewBox="0 0 13 9"><path d="M3 7l4-4 4 4" fill="none" stroke="#222" strokeWidth="2" /></svg>
          </button>
          <Track $part={428} />
          <BrowserThumb>
            <svg width="6" height="8"><path d="M0 1h6M0 4h6M0 7h6" stroke="#7f8a6b" /></svg>
          </BrowserThumb>
          <Track $part={204} />
          <button aria-label="Вниз">
            <svg width="13" height="9" viewBox="0 0 13 9"><path d="M3 2l4 4 4-4" fill="none" stroke="#222" strokeWidth="2" /></svg>
          </button>
        </BrowserRail>
      </BrowserBody>
    </BrowserWindow>
  )
}

export default function App() {
  return (
    <Screen>
      <GlobalStyle />
      <TopPanel>
        <PanelIcon $width={23} aria-label="Файлы"><FolderIcon size={19} mark /></PanelIcon>
        <Grip />
        <TaskButton><Firefox />Кнопка для перемикання...</TaskButton>
        <TaskButton><TerminalIcon />[jura@debian: ~]</TaskButton>
        <TaskButton $active><QtIcon />Qt Designer</TaskButton>
        <TaskButton><FolderIcon />sim.qtdragon_1600</TaskButton>
        <TaskButton><NoteIcon />[qtdragon_handler.py (~/li...</TaskButton>
        <Spacer />
        <Workspace $current aria-label="1"><QtIcon /></Workspace>
        <Workspace aria-label="2" />
        <Workspace aria-label="3" />
        <Workspace aria-label="4" />
      </TopPanel>
      <Desktop>
        <Wallpaper width="90" height="220" viewBox="0 0 90 220">
          <defs>
            <linearGradient id="sky">
              <stop offset="0" stopColor="#8496a8" />
              <stop offset="1" stopColor="#e3eaec" />
            </linearGradient>
            <linearGradient id="dusk" x2="0" y2="1">
              <stop offset="0" stopColor="#dfe4ea" />
              <stop offset="0.400" stopColor="#c9cdda" />
              <stop offset="0.700" stopColor="#4d6285" />
              <stop offset="1" stopColor="#141e30" />
            </linearGradient>
          </defs>
          <path d="M0 0h90v60H0z" fill="url(#sky)" />
          <path d="M70 30h20v122H70z" fill="url(#dusk)" />
          <path d="M76 0h9v60h-9z" fill="#d4dfe3" />
          <path d="M70 154h20v32H70z" fill="#dfe5e7" />
          <path d="M86 166l-8 54h12v-54z" fill="#0a0b0e" />
        </Wallpaper>
        <WallText>RU</WallText>
        <FilesWindow>
          <FilesPanes>
            <FilesPane $width="149px" $gap={3} />
            <FilesPane $gap={25} />
          </FilesPanes>
          <FilesStatus>«qtdragon_handler.py» выделен (43,6 кБ), Свободное место: 2,2 ГБ</FilesStatus>
        </FilesWindow>
        <Browser />
        <Designer />
        <Pointer width="13" height="20" viewBox="0 0 13 20">
          <path d="M1 1v15l4-3 3 6 2-1-3-6h5z" fill="#fff" stroke="#000" />
        </Pointer>
      </Desktop>
      <BottomPanel>
        <PanelIcon $width={33} aria-label="Меню"><MateLogo /></PanelIcon>
        <PanelMenu>Приложения</PanelMenu>
        <PanelMenu>Переход</PanelMenu>
        <PanelMenu>Система</PanelMenu>
        <Launcher $width={34} aria-label="Linux"><Penguin /></Launcher>
        <Launcher $width={37} aria-label="Терминал"><TerminalIcon size={21} dark /></Launcher>
        <Launcher $width={40} aria-label="Редактор"><NoteIcon size={21} /></Launcher>
        <Launcher $width={70} aria-label="Firefox"><Firefox size={23} /></Launcher>
        <PanelIcon $width={62} aria-label="Переключатель"><SwitchIcon /></PanelIcon>
        <Spacer />
        <Grip />
        <PanelMenu>en</PanelMenu>
        <PanelIcon aria-label="Громкость"><Speaker /></PanelIcon>
        <PanelIcon aria-label="Поиск"><SearchIcon /></PanelIcon>
        <Clock>Вто, 15 Сен, 11:47</Clock>
      </BottomPanel>
    </Screen>
  )
}
